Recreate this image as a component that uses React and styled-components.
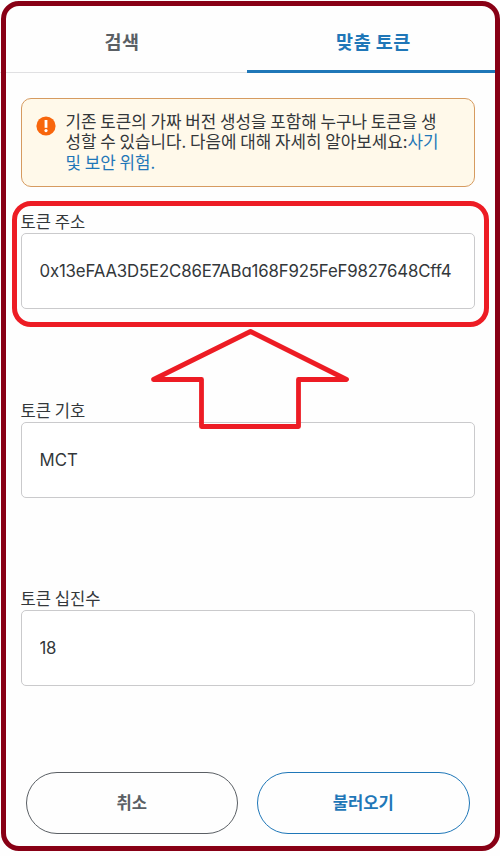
import React from 'react'
import styled, { createGlobalStyle, ThemeProvider } from 'styled-components'

const theme = {
    colors: {
        blue: '#1f77b8',
        gray: '#5a5f64',
        text: '#33373a',
        border: '#cacacc',
        warning: '#f8660c',
        warningBorder: '#d69b60',
        warningBackground: '#fff9ea',
        mark: '#ed1c24',
        frame: '#880015',
    },
}

const GlobalStyle = createGlobalStyle`
    * {
        box-sizing: border-box;
    }

    body {
        margin: 0;
        background-color: #ffffff;
        font-family: 'Noto Sans CJK KR', sans-serif;
        color: ${props => props.theme.colors.text};
    }
`

const Page = styled.div`
    position: relative;
    width: 500px;
    height: 856px;
    overflow: hidden;
    background-color: #fefefe;
`

const Frame = styled.div`
    position: absolute;
    top: 1px;
    left: 1px;
    width: 499px;
    height: 850px;
    border: 5px solid ${props => props.theme.colors.frame};
    border-radius: 18px;
    pointer-events: none;
`

const Tabs = styled.div`
    display: grid;
    grid-template-columns: 247px 253px;
    height: 73px;
    border-bottom: 1px solid #e0e0e2;
`

const Tab = styled.button`
    height: 73px;
    padding: ${props => props.$active ? '11px 0 0' : '11px 3px 0 0'};
    border: none;
    border-bottom: 3px solid ${props => props.$active ? props.theme.colors.blue : 'transparent'};
    background: none;
    font-family: inherit;
    font-size: 18.5px;
    font-weight: 700;
    letter-spacing: 0.5px;
    color: ${props => props.$active ? props.theme.colors.blue : props.theme.colors.gray};
`

const Content = styled.div`
    padding: 25px 25px 0 20.5px;
`

const Alert = styled.div`
    display: flex;
    gap: 10px;
    height: 89px;
    padding: 12px 0 0 14px;
    border: 1.5px solid ${props => props.theme.colors.warningBorder};
    border-radius: 10px;
    background-color: ${props => props.theme.colors.warningBackground};

    svg {
        flex: none;
        margin-top: 5px;
    }
`

const Message = styled.p`
    margin: 0;
    font-size: 16.85px;
    line-height: 20.3px;
    white-space: nowrap;
`

const Link = styled.a`
    color: ${props => props.theme.colors.blue};
`

const Fields = styled.div`
    display: flex;
    flex-direction: column;
    gap: 88.5px;
    margin-top: 24px;
`

const Field = styled.label`
    display: flex;
    flex-direction: column;
    height: 100px;
`

const Label = styled.span`
    height: 22px;
    font-size: 16.6px;
    line-height: 21.4px;
`

const Input = styled.input`
    width: 100%;
    height: 76px;
    padding: 0 18px;
    border: 1.5px solid ${props => props.theme.colors.border};
    border-radius: 5px;
    outline: none;
    background-color: #ffffff;
    font-family: Inter, sans-serif;
    font-feature-settings: 'cv11';
    font-size: 16.8px;
    letter-spacing: ${props => props.$spacing || '0'};
    color: ${props => props.theme.colors.text};
`

const Actions = styled.div`
    display: flex;
    gap: 19px;
    padding: 84px 5.5px 0 5px;
`

const Button = styled.button`
    flex: 1;
    height: 62px;
    padding: 0 0 3px;
    border: 1.5px solid currentColor;
    border-radius: 31px;
    background: none;
    font-family: inherit;
    font-size: 16.6px;
    font-weight: 700;
    color: ${props => props.$primary ? props.theme.colors.blue : props.theme.colors.gray};
`

const Highlight = styled.div`
    position: absolute;
    top: 201px;
    left: 12px;
    width: 477px;
    height: 126px;
    border: 5px solid ${props => props.theme.colors.mark};
    border-radius: 19px;
    pointer-events: none;
`

const Arrow = styled.svg`
    position: absolute;
    top: 326px;
    left: 148px;
    pointer-events: none;
`

const WarningIcon = () => (
    <svg width="20" height="20" viewBox="0 0 20 20">
        <circle cx="10" cy="10" r="9.6" fill={theme.colors.warning} />
        <path d="M10 4v7.8" stroke="#fff" strokeWidth="2.8" />
        <circle cx="10" cy="14.6" r="1.6" fill="#fff" />
    </svg>
)

const App = () => {
    return (
        <ThemeProvider theme={theme}>
            <GlobalStyle />
            <Page>
                <Tabs>
                    <Tab>검색</Tab>
                    <Tab $active>맞춤 토큰</Tab>
                </Tabs>
                <Content>
                    <Alert>
                        <WarningIcon />
                        <Message>
                            기존 토큰의 가짜 버전 생성을 포함해 누구나 토큰을 생<br />
                            성할 수 있습니다. 다음에 대해 자세히 알아보세요:<Link>사기<br />
                            및 보안 위험.</Link>
                        </Message>
                    </Alert>
                    <Fields>
                        <Field>
                            <Label>토큰 주소</Label>
                            <Input $spacing="-0.15px" defaultValue="0x13eFAA3D5E2C86E7ABa168F925FeF9827648Cff4" />
                        </Field>
                        <Field>
                            <Label>토큰 기호</Label>
                            <Input defaultValue="MCT" />
                        </Field>
                        <Field>
                            <Label>토큰 십진수</Label>
                            <Input $spacing="-0.4px" defaultValue="18" />
                        </Field>
                    </Fields>
                    <Actions>
                        <Button>취소</Button>
                        <Button $primary>불러오기</Button>
                    </Actions>
                </Content>
                <Highlight />
                <Arrow width="206" height="106" viewBox="148 326 206 106">
                    <path
                        d="M250.5 331.5L346.5 379.5H298.5V426.5H201.5V379.5H153.5Z"
                        fill="none"
                        stroke={theme.colors.mark}
                        strokeWidth="4.8"
                        strokeLinejoin="round"
                    />
                </Arrow>
                <Frame />
            </Page>
        </ThemeProvider>
    )
}

export default App
